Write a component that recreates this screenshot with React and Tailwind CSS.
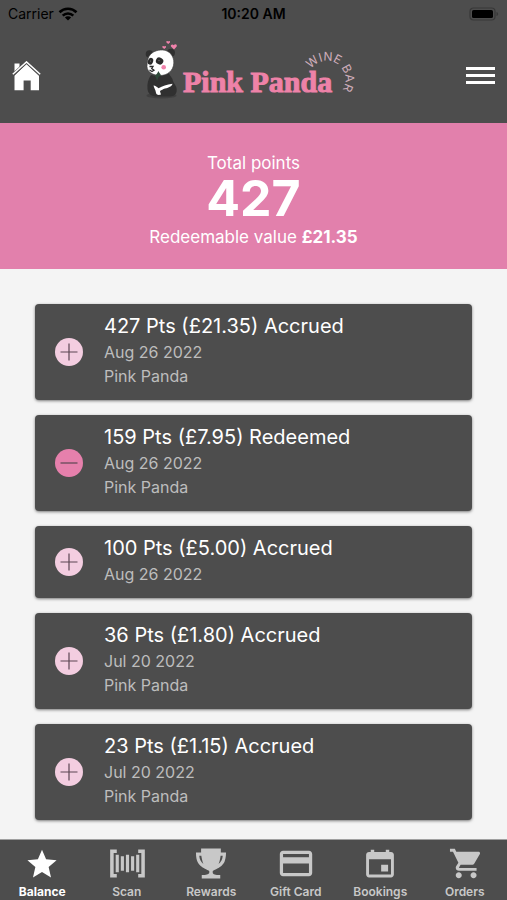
import { IoMdCalendar, IoMdCard, IoMdCart, IoMdStar, IoMdTrophy } from 'react-icons/io';

const transactions = [
  { id: 1, points: 427, value: '£21.35', type: 'Accrued', date: 'Aug 26 2022', place: 'Pink Panda' },
  { id: 2, points: 159, value: '£7.95', type: 'Redeemed', date: 'Aug 26 2022', place: 'Pink Panda' },
  { id: 3, points: 100, value: '£5.00', type: 'Accrued', date: 'Aug 26 2022' },
  { id: 4, points: 36, value: '£1.80', type: 'Accrued', date: 'Jul 20 2022', place: 'Pink Panda' },
  { id: 5, points: 23, value: '£1.15', type: 'Accrued', date: 'Jul 20 2022', place: 'Pink Panda' },
];

const tabs = [
  { label: 'Balance', icon: IoMdStar, active: true },
  { label: 'Scan', icon: ScanIcon },
  { label: 'Rewards', icon: IoMdTrophy },
  { label: 'Gift Card', icon: IoMdCard },
  { label: 'Bookings', icon: IoMdCalendar },
  { label: 'Orders', icon: IoMdCart },
];

function ScanIcon({ size }) {
  return (
    <svg width={size} height={size} viewBox="0 0 38 38" fill="none" stroke="currentColor" strokeWidth="3.2">
      <path d="M8.500 6.500h-5v25h5M30.500 6.500h5v25h-5" strokeWidth="3.600" />
      <path d="M9 10v18M14.250 11.500v15M19.500 10v18M24.750 11.500v15M30 10v18" />
    </svg>
  );
}

function StatusBar() {
  return (
    <div className="grid h-7 grid-cols-3 items-center px-2 text-sm text-black">
      <div className="flex items-center gap-1">
        <span>Carrier</span>
        <svg width="20" height="14" viewBox="0 0 20 14" fill="none" stroke="currentColor" strokeWidth="2.6">
          <path d="M1.5 5.2a12.2 12.2 0 0 1 17 0" />
          <path d="M4.7 8.6a7.6 7.6 0 0 1 10.6 0" />
          <path d="M10 13.6 6.9 10.5a4.4 4.4 0 0 1 6.2 0Z" fill="currentColor" stroke="none" />
        </svg>
      </div>
      <span className="text-center font-semibold">10:20 AM</span>
      <svg className="justify-self-end" width="30" height="14" viewBox="0 0 30 14">
        <rect x="1" y="1" width="25" height="12" rx="3.5" fill="none" stroke="#383838" strokeWidth="1.2" />
        <rect x="3" y="3" width="21" height="8" rx="1.6" fill="#000" />
        <path d="M27.5 5v4c1-.4 1.6-1.1 1.6-2s-.6-1.6-1.6-2Z" fill="#383838" />
      </svg>
    </div>
  );
}

function HomeIcon() {
  return (
    <svg width="30" height="30" viewBox="0 0 30 30" fill="#fff">
      <path d="M2.5 2.5h5v4.2l-5 4.8Z" />
      <path d="M14.5 2.8 27 14.5v14.7h-8.3v-9.7h-7.1v9.7H2.5V14.5Z" />
      <path d="m1 13.7 13.500-12.500L28 13.700" fill="none" stroke="#4d4d4d" strokeWidth="3" />
      <path d="M.8 13.2 14.5.9l13.7 12.3" fill="none" stroke="#fff" strokeWidth="1.5" />
    </svg>
  );
}

function Logo() {
  return (
    <svg
      className="overflow-visible"
      width="216"
      height="75"
      viewBox="146 38 216 75"
      role="img"
      aria-label="Pink Panda Wine Bar"
    >
      <defs>
        <path id="wine-arc" d="M311 69.500A18.500 18.500 0 1 1 342.500 89.500" />
      </defs>
      {/* body */}
      <ellipse cx="161.500" cy="95.500" rx="15" ry="3" fill="#3f3f3f" />
      <path
        d="M151 75c-3 4-4 9-3.500 14 .5 5 4 7.500 10 7.500h12c5.500 0 8-3.500 7-8.500-.8-3.500-3.500-5-4-9l-4-6-11 3Z"
        fill="#303030"
      />
      {/* head */}
      <circle cx="149.500" cy="54" r="3.800" fill="#303030" />
      <circle cx="171" cy="52.800" r="4" fill="#303030" />
      <path
        d="M149 56.500c3-5 8-6.500 13.500-6.500 7 .3 11.500 6 11.300 13-.3 8-6.800 12.500-13.800 12.500s-12.800-3.500-13-9c0-4 .8-7.500 2-10Z"
        fill="#fff"
        stroke="#3a3a3a"
        strokeWidth=".6"
      />
      <ellipse cx="150.500" cy="61.300" rx="2.600" ry="3.500" fill="#2c2c2c" transform="rotate(20 150.500 61.300)" />
      <ellipse cx="159.600" cy="61" rx="3.800" ry="3.400" fill="#2c2c2c" transform="rotate(25 159.600 61)" />
      <circle cx="150.500" cy="61" r=".6" fill="#777" />
      <circle cx="159" cy="60.600" r=".7" fill="#777" />
      <path d="M149.500 66.500h3.500l-1.300 2 2.300 1.800-2 1.200-2.500-1.500" fill="none" stroke="#2c2c2c" strokeWidth="1.300" />
      <circle cx="163.700" cy="67.300" r="2.300" fill="#f082ab" />
      <path d="M154.500 75.500c2-.5 2.500-2 4-4.500.5 2 2 2.500 2.500 4.500l-2.500 1.500-1.500 4-1-3.500Z" fill="#2f4a3a" />
      {/* paws */}
      <path
        d="M153.500 85.500c2 0 3.500 1.500 5 2.800 4-2 8-4 14-4.500-.5 3-5 4.200-9 5.200-1.500 1-3.500 1.500-3.500 2.500l1 3c-3 1-5 0-5.200-2.500-.1-2-1.800-4-2.300-6.500Z"
        fill="#fff"
      />
      {/* hearts */}
      <g fill="#f082ab">
        <path d="m174 49.500-2.800-2.700c-1.400-1.800 1.300-3.500 2.600-1.500 1-2 3.700-.9 2.900 1.100Z" />
        <path d="m168.200 44-1.700-1.600c-.8-1.200.9-2.200 1.700-.9.700-1.200 2.300-.4 1.700.9Z" />
        <path d="m164.200 49-1.700-1.600c-.8-1.200.9-2.200 1.700-.9.700-1.200 2.300-.4 1.700.9Z" />
      </g>
      <text
        x="183"
        y="92"
        fill="#ee82a8"
        stroke="#ee82a8"
        strokeWidth="1"
        className="font-['Liberation_Serif',serif] text-[30px] font-bold"
      >
        Pink Panda
      </text>
      <text fill="#cfaebb" className="font-[Inter,sans-serif] text-[12px]">
        <textPath href="#wine-arc">WINE BAR</textPath>
      </text>
    </svg>
  );
}

function Transaction({ item }) {
  const redeemed = item.type === 'Redeemed';

  return (
    <li className="flex items-center rounded-sm bg-[#4d4d4d] pr-4 pl-5 shadow-[0_1px_3px_rgba(0,0,0,0.5)]">
      <svg className="mr-[21px] shrink-0" width="28" height="28" viewBox="0 0 28 28">
        <circle cx="14" cy="14" r="14" fill={redeemed ? '#e680ac' : '#f3cde0'} />
        <path d={redeemed ? 'M5.5 14h17' : 'M5.5 14h17M14 5.5v17'} stroke="#5c4753" strokeWidth="1.2" />
      </svg>
      <div className="pt-2 pb-3 text-base leading-6 text-[#bdbdbd]">
        <h2 className="text-xl leading-7 text-white">
          {item.points} Pts ({item.value}) {item.type}
        </h2>
        <p>{item.date}</p>
        {item.place && <p>{item.place}</p>}
      </div>
    </li>
  );
}

export default function App() {
  return (
    <div className="flex min-h-screen flex-col bg-[#f4f4f4] font-[Inter,sans-serif]">
      <header className="bg-[#4d4d4d]">
        <StatusBar />
        <div className="flex h-[95px] items-center justify-between px-3">
          <button type="button" aria-label="Home">
            <HomeIcon />
          </button>
          <Logo />
          <button type="button" aria-label="Menu" className="flex w-[29px] flex-col gap-1">
            <span className="h-[3px] w-full bg-white" />
            <span className="h-[3px] w-full bg-white" />
            <span className="h-[3px] w-full bg-white" />
          </button>
        </div>
      </header>

      <section className="flex flex-col items-center bg-[#e280ac] pt-7 pb-5 text-[17px] leading-6 text-white">
        <p>Total points</p>
        <p className="mb-1 text-[50px] leading-[46px] font-bold">427</p>
        <p>
          Redeemable value <strong>£21.35</strong>
        </p>
      </section>

      <main className="flex-1 px-[35px] pt-[35px] pb-[18px]">
        <ul className="flex flex-col gap-[15px]">
          {transactions.map((item) => (
            <Transaction key={item.id} item={item} />
          ))}
        </ul>
      </main>

      <nav className="sticky bottom-0 grid grid-cols-6 border-t border-[#a0a0a0] bg-[#4d4d4d]">
        {tabs.map(({ label, icon: Icon, active }) => (
          <a
            key={label}
            href="#"
            className={`flex h-[60px] flex-col items-center gap-0.5 pt-[5px] text-xs leading-4 ${
              active ? 'font-bold text-white' : 'font-semibold text-[#c8c8c8]'
            }`}
          >
            <Icon size={38} />
            {label}
          </a>
        ))}
      </nav>
    </div>
  );
}
